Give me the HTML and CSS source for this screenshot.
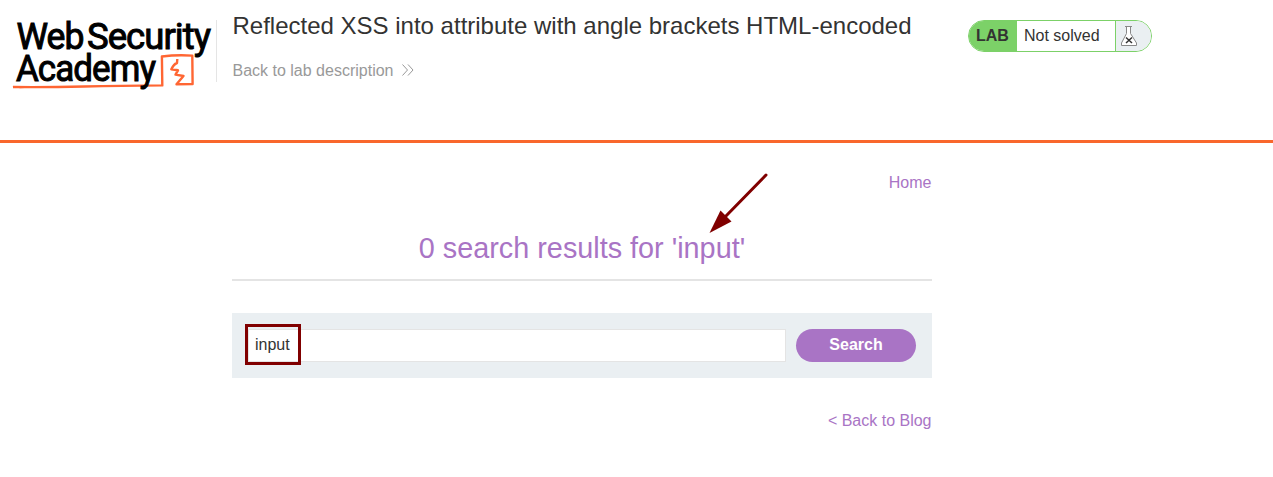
FILE: index.html
```html
<!DOCTYPE html>
<html lang="en">
<head>
<meta charset="utf-8">
<title>Reflected XSS into attribute with angle brackets HTML-encoded</title>
<link rel="stylesheet" href="styles.css">
</head>
<body>
<header class="lab-header">
  <svg class="logo" width="216" height="100" viewBox="0 0 216 100" role="img" aria-label="Web Security Academy">
    <path class="logo-line" d="M13 87 Q48 87.3 84 86.5 T162.300 85.400 L161.900 56.500 Q177 54.500 192.300 55.600 L192.600 84 L176.500 84.200 L183.500 76 L175.500 74.600 L178 70.300 L171.300 69.300 Q174 64 177 63 L177.300 59"/>
    <path class="logo-brush" d="M12 86.500 L60 86 L20 88.300 Z"/>
    <g class="logo-words">
      <text x="16.500" y="48.500" textLength="67" lengthAdjust="spacingAndGlyphs">Web</text>
      <text x="87" y="48.500" textLength="123" lengthAdjust="spacingAndGlyphs">Security</text>
      <text x="16" y="81" textLength="139" lengthAdjust="spacingAndGlyphs">Academy</text>
    </g>
  </svg>
  <div class="title-block">
    <h2 class="lab-title">Reflected XSS into attribute with angle brackets HTML-encoded</h2>
    <a class="lab-link">Back to lab description
      <svg width="14" height="14" viewBox="0 0 14 14"><path d="M1.500 1.500 L6.500 7 L1.500 12.500 M7 1.500 L12 7 L7 12.500"/></svg>
    </a>
  </div>
  <div class="lab-status">
    <span class="lab-tag">LAB</span>
    <span class="lab-state">Not solved</span>
    <span class="lab-flask">
      <svg width="18" height="22" viewBox="0 0 18 22">
        <path class="flask" d="M5 1.500 H12 M6.500 2 V8.500 L1.500 18 V20.500 H16.500 V18 L10.500 8.500 V2"/>
        <path class="cross" d="M6 12.500 L12 18 M12 12.500 L6 18"/>
      </svg>
    </span>
  </div>
</header>
<main class="content">
  <nav class="nav"><a>Home</a></nav>
  <h1 class="results">0 search results for 'input'</h1>
  <form class="search">
    <input class="search-input" type="text" value="input" aria-label="Search">
    <button class="search-button" type="button">Search</button>
  </form>
  <div class="back"><a>&lt; Back to Blog</a></div>
  <svg class="arrow" width="60" height="62" viewBox="0 0 60 62">
    <path class="arrow-shaft" d="M57 2 L16 44"/>
    <path class="arrow-head" d="M0.500 60 L11.500 37.500 L22.500 48.500 Z"/>
  </svg>
  <span class="highlight"></span>
</main>
</body>
</html>
```
FILE: styles.css
```css
* { box-sizing: border-box; }
body {
  margin: 0;
  height: 477px;
  overflow: hidden;
  background: #fff;
  color: #333332;
  font: 16px/20px "Liberation Sans", Arial, sans-serif;
}
.lab-header {
  display: flex;
  align-items: flex-start;
  height: 143px;
  border-bottom: 3px solid #f9672c;
}
.logo { flex: none; overflow: visible; }
.logo-line { fill: none; stroke: #ff6633; stroke-width: 2.4; stroke-linejoin: round; }
.logo-brush { fill: #ff6633; }
.logo-words {
  font: 400 37.500px Roboto, sans-serif;
  letter-spacing: -1px;
  fill: #000;
  stroke: #000;
  stroke-width: 1px;
}
.title-block {
  width: 736px;
  height: 62px;
  margin-top: 20px;
  padding-left: 15.500px;
  border-left: 1px solid #e5e5e5;
}
.lab-title {
  margin: -8px 0 0;
  font-size: 24px;
  font-weight: 400;
  line-height: 28px;
  white-space: nowrap;
}
.lab-link {
  display: flex;
  align-items: center;
  gap: 7.500px;
  margin-top: 21px;
  color: #999;
}
.lab-link svg { margin-top: -2px; fill: none; stroke: #999; stroke-width: 1; }
.lab-status {
  display: flex;
  width: 184px;
  height: 32px;
  margin: 20px 0 0 16px;
  border: 1px solid #7cd168;
  border-radius: 16px;
  overflow: hidden;
  line-height: 30px;
}
.lab-tag {
  width: 48px;
  padding-left: 7px;
  background: #7cd168;
  font-weight: 700;
}
.lab-state { width: 98px; padding-left: 7px; }
.lab-flask {
  display: flex;
  flex: 1;
  align-items: center;
  padding-left: 4px;
  border-left: 1px solid #7cd168;
  background: #eaeff2;
}
.flask { fill: #fff; stroke: #888; stroke-width: 1; }
.cross { fill: none; stroke: #333; stroke-width: 1.500; }
.content {
  position: relative;
  width: 700px;
  margin-left: 232px;
  padding-top: 30px;
  color: #a974c5;
}
.nav, .back { padding-right: 0.500px; text-align: right; }
.results {
  height: 65px;
  margin: 23px 0 32px;
  padding-top: 15px;
  border-bottom: 2px solid #e4e4e4;
  font-size: 28.800px;
  font-weight: 400;
  line-height: 34px;
  text-align: center;
}
.search {
  display: flex;
  gap: 10px;
  height: 65px;
  padding: 16px;
  background: #eaeff2;
}
.search-input {
  width: 538px;
  height: 33px;
  padding: 0 6px 1px;
  border: 1px solid #e4e4e4;
  background: #fff;
  color: #333332;
  font: inherit;
}
.search-button {
  width: 120px;
  height: 33px;
  padding: 0 0 2px;
  border: 0;
  border-radius: 17px;
  background: #a974c5;
  color: #fff;
  font: 700 16px "Liberation Sans", Arial, sans-serif;
}
.back { margin-top: 33px; }
.arrow { position: absolute; left: 477px; top: 30px; }
.arrow-shaft { fill: none; stroke: #800000; stroke-width: 3; stroke-linecap: round; }
.arrow-head { fill: #800000; }
.highlight {
  position: absolute;
  left: 13px;
  top: 181px;
  width: 56px;
  height: 41px;
  border: 3px solid #800000;
}
```
